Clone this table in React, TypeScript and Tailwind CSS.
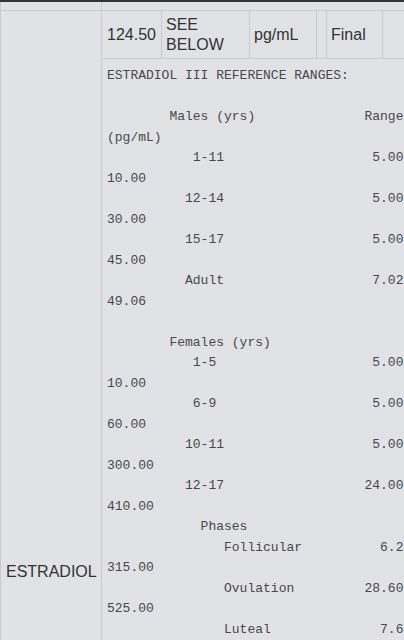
const pad = (indent: number, label: string, col: number, value: string) =>
  ' '.repeat(indent) + label + ' '.repeat(Math.max(1, col - indent - label.length)) + value

const lines: string[] = [
  'ESTRADIOL III REFERENCE RANGES:',
  '',
  pad(8, 'Males (yrs)', 33, 'Range'),
  '(pg/mL)',
  pad(11, '1-11', 34, '5.00-'),
  '10.00',
  pad(10, '12-14', 34, '5.00-'),
  '30.00',
  pad(10, '15-17', 34, '5.00-'),
  '45.00',
  pad(10, 'Adult', 34, '7.02-'),
  '49.06',
  '',
  pad(8, 'Females (yrs)', 40, ''),
  pad(11, '1-5', 34, '5.00-'),
  '10.00',
  pad(11, '6-9', 34, '5.00-'),
  '60.00',
  pad(10, '10-11', 34, '5.00-'),
  '300.00',
  pad(10, '12-17', 33, '24.00-'),
  '410.00',
  pad(12, 'Phases', 40, ''),
  pad(15, 'Follicular', 35, '6.20-'),
  '315.00',
  pad(15, 'Ovulation', 33, '28.60-'),
  '525.00',
  pad(15, 'Luteal', 35, '7.69-'),
  '166.00',
  '',
  pad(8, 'Postmenopausal', 35, '5.00-'),
  '54.70',
]

export default function App() {
  return (
    <div className="h-[640px] w-[404px] overflow-hidden bg-[#e1e2e6] text-[#333] font-['Liberation_Sans',Arial,sans-serif]">
      <div className="h-[2px] bg-[#343434]" />
      <div className="flex w-max">
        {/* test name, spans result + comment rows */}
        <div className="flex w-[102px] shrink-0 flex-col border-x border-[#c9cacf]">
          <div className="h-[9px] border-b border-[#c9cacf]" />
          <div className="flex flex-1 items-center pl-[5px] text-[16px]">ESTRADIOL</div>
        </div>

        <div className="flex w-[520px] flex-col">
          <div className="h-[9px] border-b border-[#c9cacf]" />
          <div className="flex h-[48px] border-b border-[#c9cacf] text-[16px]">
            <div className="flex w-[60px] items-center border-r border-[#c9cacf] pl-[5px]">124.50</div>
            <div className="flex w-[88px] items-center border-r border-[#c9cacf] pl-[4px] leading-[20px]">SEE BELOW</div>
            <div className="flex w-[67px] items-center border-r border-[#c9cacf] pl-[4px]">pg/mL</div>
            <div className="w-[10px] border-r border-[#c9cacf]" />
            <div className="flex w-[56px] items-center border-r border-[#c9cacf] pl-[4px]">Final</div>
            <div className="w-[60px] border-r border-[#c9cacf]" />
          </div>
          <div className="h-[1074px] overflow-hidden px-[5px] pt-[7px] font-['Liberation_Mono','Courier_New',monospace] text-[13px] leading-[20.5px] text-[#484848]">
            {lines.map((l, i) => (
              <div key={i} className="h-[20.5px] whitespace-pre">{l}</div>
            ))}
          </div>
        </div>
      </div>
    </div>
  )
}
